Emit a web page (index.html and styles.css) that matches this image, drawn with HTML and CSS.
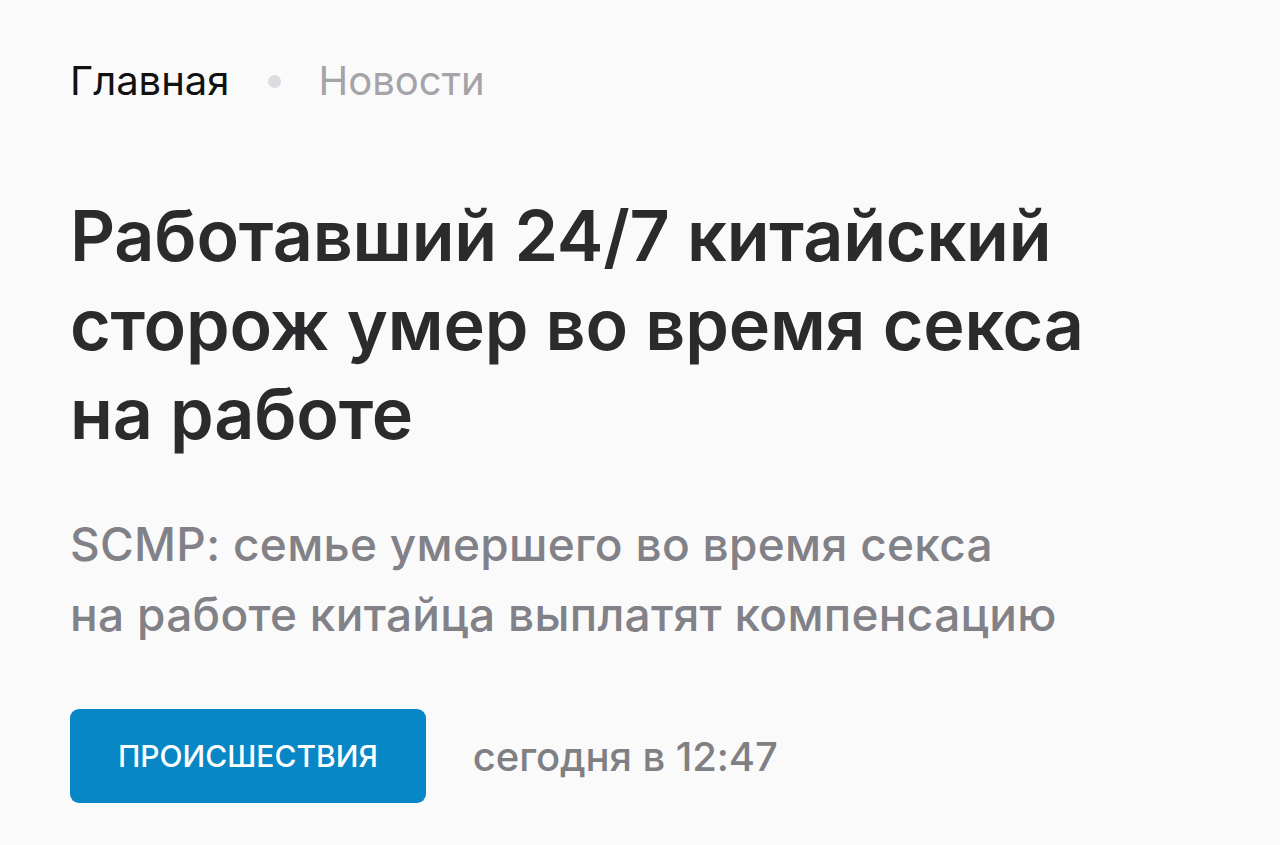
FILE: index.html
```html
<!DOCTYPE html>
<html lang="ru">

<head>
    <meta charset="UTF-8">
    <meta name="viewport" content="width=device-width, initial-scale=1.0">
    <title>Работавший 24/7 китайский сторож умер во время секса на работе</title>
    <link rel="stylesheet" href="styles.css">
</head>

<body>
    <article class="news">
        <nav class="crumbs">
            <a href="#" class="crumbs-home">Главная</a>
            <span class="crumbs-dot"></span>
            <a href="#" class="crumbs-current">Новости</a>
        </nav>

        <h1 class="news-title">Работавший 24/7 китайский сторож умер во время секса на работе</h1>

        <p class="news-lead">SCMP: семье умершего во время секса<br>на работе китайца выплатят компенсацию</p>

        <div class="news-meta">
            <a href="#" class="news-tag">ПРОИСШЕСТВИЯ</a>
            <span class="news-date">сегодня в 12:47</span>
        </div>
    </article>
</body>

</html>
```

FILE: styles.css
```css
body {
    font-family: Inter, "Noto Sans", sans-serif;
    background-color: #fafafa;
    margin: 0;
    padding: 0;
}

.news {
    padding: 58px 70px 0;
    max-width: 1040px;
}

.crumbs {
    display: flex;
    align-items: center;
    font-size: 40px;
    line-height: 46px;
}

.crumbs a {
    text-decoration: none;
}

.crumbs-home {
    color: #111;
}

.crumbs-dot {
    width: 13px;
    height: 13px;
    border-radius: 50%;
    background: #dcdce0;
    margin: 0 38px;
}

.crumbs-current {
    color: #a3a3a8;
}

.news-title {
    font-size: 70px;
    line-height: 89px;
    font-weight: 600;
    letter-spacing: -0.2px;
    color: #2b2b2d;
    margin: 87px 0 0;
}

.news-lead {
    font-size: 46px;
    line-height: 70px;
    font-weight: 500;
    letter-spacing: 0.3px;
    color: #818187;
    margin: 51px 0 0;
}

.news-meta {
    display: flex;
    align-items: center;
    margin-top: 60px;
    gap: 47px;
}

.news-tag {
    display: block;
    background-color: #0787c6;
    color: #fff;
    text-decoration: none;
    font-size: 30px;
    font-weight: 500;
    padding: 0 48px;
    line-height: 94px;
    border-radius: 9px;
}

.news-date {
    font-size: 40px;
    font-weight: 500;
    letter-spacing: -0.1px;
    color: #7f7f84;
}
```
